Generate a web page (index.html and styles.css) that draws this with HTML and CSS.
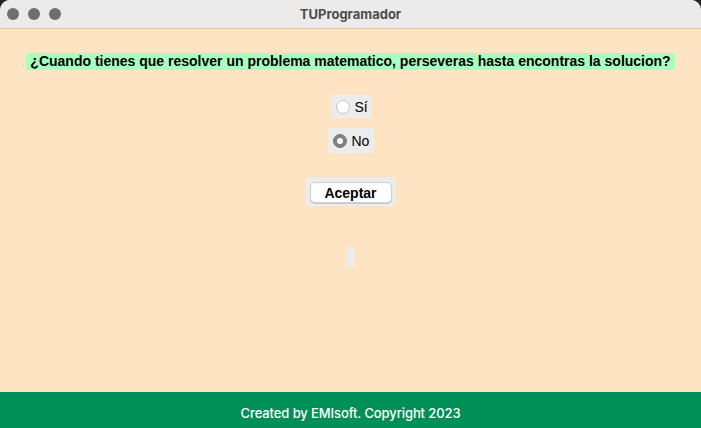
FILE: index.html
```html
<!DOCTYPE html>
<html lang="es">
<head>
<meta charset="utf-8">
<title>TUProgramador</title>
<link rel="stylesheet" href="styles.css">
</head>
<body>
<div class="window">
  <div class="titlebar">
    <div class="lights">
      <span class="light"></span>
      <span class="light"></span>
      <span class="light"></span>
    </div>
    <div class="title">TUProgramador</div>
  </div>
  <main class="content">
    <div class="question">¿Cuando tienes que resolver un problema matematico, perseveras hasta encontras la solucion?</div>
    <label class="radio radio-si"><span class="dot"></span><span>Sí</span></label>
    <label class="radio radio-no"><span class="dot checked"></span><span>No</span></label>
    <div class="btn-frame"><button class="btn">Aceptar</button></div>
    <div class="result"></div>
  </main>
  <footer class="footer">Created by EMIsoft. Copyright 2023</footer>
</div>
</body>
</html>
```
FILE: styles.css
```css
html, body {
  margin: 0;
  padding: 0;
  background: #23232b;
  width: 701px;
  height: 428px;
  overflow: hidden;
}
.window {
  width: 701px;
  height: 428px;
  display: flex;
  flex-direction: column;
  background: #ffe4c4;
  border-radius: 10px 10px 0 0;
  overflow: hidden;
  font-family: "Liberation Sans", Arial, sans-serif;
}
.titlebar {
  height: 28px;
  flex: 0 0 28px;
  background: #ebebeb;
  border-bottom: 1px solid #e8c59c;
  display: flex;
  align-items: center;
  position: relative;
}
.lights {
  display: flex;
  gap: 9px;
  padding-left: 7px;
}
.light {
  width: 12px;
  height: 12px;
  border-radius: 50%;
  background: #6f6f6f;
}
.title {
  position: absolute;
  left: 0;
  right: 0;
  top: 0;
  line-height: 28px;
  text-align: center;
  font-family: Inter, "Liberation Sans", sans-serif;
  font-weight: 700;
  font-size: 13px;
  color: #4c4c4c;
}
.content {
  flex: 1;
  display: flex;
  flex-direction: column;
  align-items: center;
  padding-top: 24px;
}
.question {
  background: #a8ffbf;
  font-weight: 700;
  font-size: 14px;
  line-height: 17px;
  height: 17px;
  padding: 0 4px;
  color: #000;
  white-space: nowrap;
}
.radio {
  display: flex;
  align-items: center;
  background: #ececec;
  font-size: 14px;
  color: #000;
  gap: 5px;
}
.radio-si {
  margin-top: 25px;
  width: 40px;
  height: 23px;
  box-sizing: border-box;
  padding-left: 5px;
}
.radio-no {
  margin-top: 10px;
  width: 46px;
  height: 25px;
  box-sizing: border-box;
  padding-left: 5px;
}
.dot {
  width: 14px;
  height: 14px;
  box-sizing: border-box;
  border-radius: 50%;
  background: #fff;
  border: 1px solid #c4c4c4;
  display: flex;
  align-items: center;
  justify-content: center;
}
.dot.checked {
  background: #808080;
  border-color: #7a7a7a;
}
.dot.checked::after {
  content: "";
  width: 6px;
  height: 6px;
  border-radius: 50%;
  background: #fff;
}
.btn-frame {
  margin-top: 24px;
  width: 89px;
  height: 29px;
  box-sizing: border-box;
  background: #ececec;
  display: flex;
  align-items: center;
  justify-content: center;
  padding-top: 2px;
}
.btn {
  width: 82px;
  height: 21px;
  background: #fff;
  border: 1px solid #cfcfcf;
  border-radius: 5px;
  box-shadow: 0 1px 1px rgba(0,0,0,0.15);
  font-family: "Liberation Sans", Arial, sans-serif;
  font-weight: 700;
  font-size: 14px;
  color: #000;
  padding: 0;
}
.result {
  margin-top: 41px;
  width: 7px;
  height: 21px;
  background: #ececec;
}
.footer {
  flex: 0 0 36px;
  height: 36px;
  background: #009057;
  color: #fff;
  font-family: Inter, "Liberation Sans", sans-serif;
  font-weight: 500;
  font-size: 13px;
  letter-spacing: -0.1px;
  display: flex;
  align-items: center;
  justify-content: center;
  padding-top: 6px;
  box-sizing: border-box;
}
```
